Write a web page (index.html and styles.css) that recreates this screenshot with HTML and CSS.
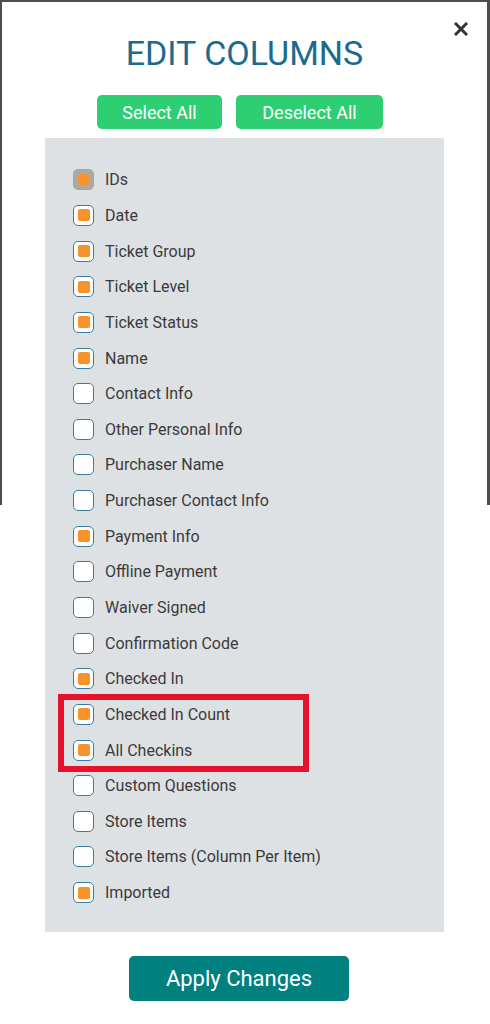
FILE: index.html
```html
<!DOCTYPE html>
<html>
<head>
<meta charset="utf-8">
<link rel="stylesheet" href="styles.css">
</head>
<body>
<div class="modal">
  <div class="close">
    <svg width="14" height="14" viewBox="0 0 14 14"><path d="M2 2 L12 12 M12 2 L2 12" stroke="#333" stroke-width="3" stroke-linecap="square"/></svg>
  </div>
  <h1 class="title">EDIT COLUMNS</h1>
  <div class="btn-row">
    <button class="btn-green sel">Select All</button>
    <button class="btn-green desel">Deselect All</button>
  </div>
  <div class="panel">
    <div class="row"><span class="cb on disabled"></span><span class="lbl">IDs</span></div>
    <div class="row"><span class="cb on"></span><span class="lbl">Date</span></div>
    <div class="row"><span class="cb on"></span><span class="lbl">Ticket Group</span></div>
    <div class="row"><span class="cb on"></span><span class="lbl">Ticket Level</span></div>
    <div class="row"><span class="cb on"></span><span class="lbl">Ticket Status</span></div>
    <div class="row"><span class="cb on"></span><span class="lbl">Name</span></div>
    <div class="row"><span class="cb"></span><span class="lbl">Contact Info</span></div>
    <div class="row"><span class="cb"></span><span class="lbl">Other Personal Info</span></div>
    <div class="row"><span class="cb"></span><span class="lbl">Purchaser Name</span></div>
    <div class="row"><span class="cb"></span><span class="lbl">Purchaser Contact Info</span></div>
    <div class="row"><span class="cb on"></span><span class="lbl">Payment Info</span></div>
    <div class="row"><span class="cb"></span><span class="lbl">Offline Payment</span></div>
    <div class="row"><span class="cb"></span><span class="lbl">Waiver Signed</span></div>
    <div class="row"><span class="cb"></span><span class="lbl">Confirmation Code</span></div>
    <div class="row"><span class="cb on"></span><span class="lbl">Checked In</span></div>
    <div class="highlight">
      <div class="row"><span class="cb on"></span><span class="lbl">Checked In Count</span></div>
      <div class="row"><span class="cb on"></span><span class="lbl">All Checkins</span></div>
    </div>
    <div class="row"><span class="cb"></span><span class="lbl">Custom Questions</span></div>
    <div class="row"><span class="cb"></span><span class="lbl">Store Items</span></div>
    <div class="row"><span class="cb"></span><span class="lbl">Store Items (Column Per Item)</span></div>
    <div class="row"><span class="cb on"></span><span class="lbl">Imported</span></div>
  </div>
  <div class="apply-row">
    <button class="btn-apply">Apply Changes</button>
  </div>
</div>
</body>
</html>
```
FILE: styles.css
```css
html, body {
  margin: 0;
  padding: 0;
}
body {
  width: 490px;
  height: 1024px;
  overflow: hidden;
  background: linear-gradient(to bottom, #4d4d4d 0, #4d4d4d 505px, #ffffff 505px);
  font-family: Roboto, "Liberation Sans", sans-serif;
}
.modal {
  position: relative;
  margin: 2px 3px 0 2px;
  background: #fff;
  height: 1022px;
  padding-top: 34px;
  box-sizing: border-box;
}
.close {
  position: absolute;
  top: 20px;
  left: 452px;
  width: 14px;
  height: 14px;
}
.close svg { display: block; }
.title {
  margin: 0;
  font-weight: 400;
  font-size: 34px;
  line-height: 34px;
  text-align: center;
  color: #1c6b8d;
  letter-spacing: 0;
}
.btn-row {
  display: flex;
  justify-content: center;
  gap: 14px;
  margin-top: 25px;
  padding-right: 9px;
}
.btn-green {
  height: 34px;
  border: none;
  border-radius: 5px;
  background: #2ecf72;
  color: #fff;
  font-family: Roboto, "Liberation Sans", sans-serif;
  font-size: 18px;
  padding: 0;
}
.sel { width: 125px; }
.desel { width: 147px; }
.panel {
  margin: 9px 43px 0 43px;
  height: 794px;
  box-sizing: border-box;
  padding: 24px 0 0 28px;
  background: #dee1e4;
}
.row {
  display: flex;
  align-items: center;
  height: 35.65px;
}
.cb {
  width: 21px;
  height: 21px;
  box-sizing: border-box;
  border: 1.5px solid #3b7c9e;
  border-radius: 5px;
  background: #fff;
  display: flex;
  align-items: center;
  justify-content: center;
  flex-shrink: 0;
}
.cb.on::after {
  content: "";
  width: 12px;
  height: 12px;
  border-radius: 2px;
  background: #f8922b;
}
.cb.disabled {
  border-color: #a5a5a5;
  background: #a9a9a9;
}
.cb.disabled::after {
  width: 11px;
  height: 11px;
}
.lbl {
  margin-left: 11px;
  font-size: 16px;
  color: #3a3a3a;
}
.highlight {
  position: relative;
}
.highlight::after {
  content: "";
  position: absolute;
  left: -15px;
  top: -3px;
  width: 251px;
  height: 78px;
  box-sizing: border-box;
  border: 6px solid #e8112d;
  pointer-events: none;
}
.apply-row {
  display: flex;
  justify-content: center;
  margin-top: 24px;
  padding-right: 11px;
}
.btn-apply {
  width: 220px;
  height: 45px;
  border: none;
  border-radius: 5px;
  background: #00807f;
  color: #fff;
  font-family: Roboto, "Liberation Sans", sans-serif;
  font-size: 22px;
  padding: 0;
}
```
